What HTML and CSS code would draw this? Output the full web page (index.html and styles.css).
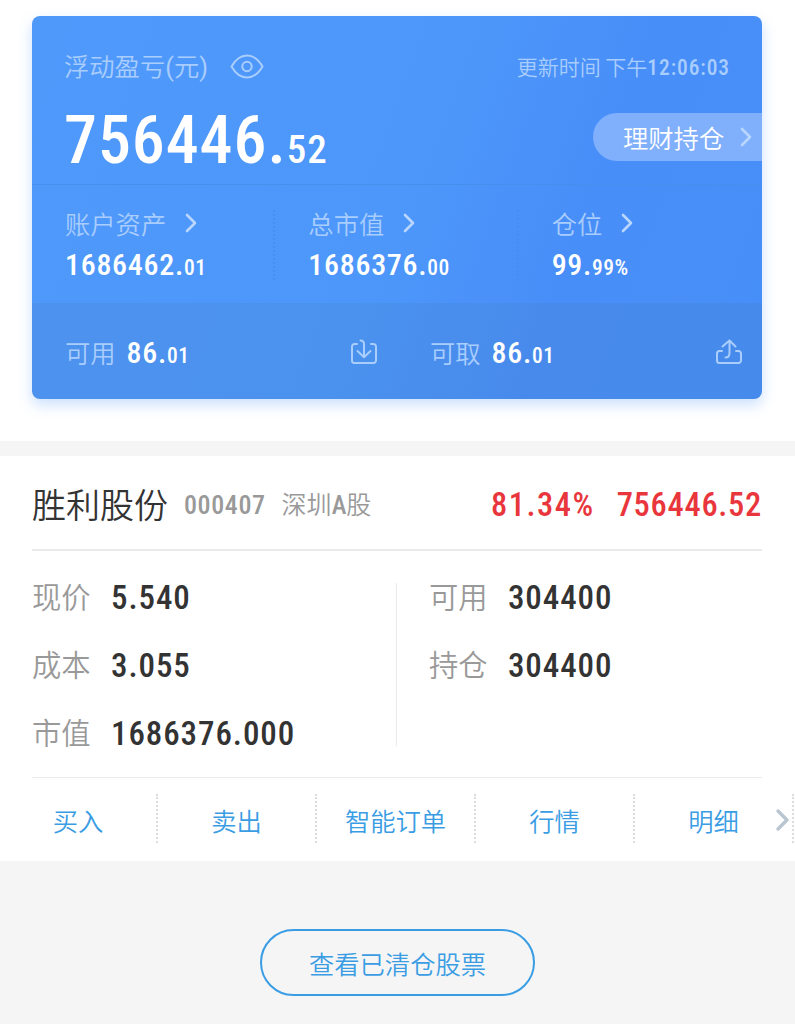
FILE: index.html
```
<!DOCTYPE html>
<html lang="zh-CN">
<head>
    <meta charset="UTF-8">
    <meta name="viewport" content="width=device-width, initial-scale=1.0">
    <title>持仓</title>
    <link rel="stylesheet" href="styles.css">
</head>
<body>

    <!-- 账户概览 -->
    <section class="overview">
        <div class="card">
            <div class="card-top">
                <div class="row title-row">
                    <span class="label">浮动盈亏<span class="paren">(</span>元<span class="paren">)</span></span>
                    <svg class="eye" viewBox="0 0 34 26" width="34" height="26">
                        <path d="M1.500 12.500C5.500 5.500 11 1.500 17 1.500s11.500 4 15.500 11c-4 7-9.500 11-15.500 11s-11.500-4-15.500-11z"/>
                        <circle cx="17" cy="12.500" r="4.700"/>
                    </svg>
                    <span class="time">更新时间 下午<span class="num">12:06:03</span></span>
                </div>
                <div class="row profit-row">
                    <span class="profit num">756446.<small>52</small></span>
                    <a class="pill" href="#">理财持仓
                        <svg class="arrow" viewBox="0 0 12 20" width="12" height="20"><path d="M2 2l8 8-8 8"/></svg>
                    </a>
                </div>
            </div>

            <div class="stats">
                <div class="stat">
                    <span class="label">账户资产<svg class="arrow" viewBox="0 0 12 20" width="12" height="20"><path d="M2 2l8 8-8 8"/></svg></span>
                    <span class="value num">1686462.<small>01</small></span>
                </div>
                <div class="stat">
                    <span class="label">总市值<svg class="arrow" viewBox="0 0 12 20" width="12" height="20"><path d="M2 2l8 8-8 8"/></svg></span>
                    <span class="value num">1686376.<small>00</small></span>
                </div>
                <div class="stat">
                    <span class="label">仓位<svg class="arrow" viewBox="0 0 12 20" width="12" height="20"><path d="M2 2l8 8-8 8"/></svg></span>
                    <span class="value num">99.<small>99%</small></span>
                </div>
            </div>

            <div class="cash">
                <div class="cash-item">
                    <span class="label">可用</span>
                    <span class="value num">86.<small>01</small></span>
                    <svg class="transfer" viewBox="0 0 28 26" width="28" height="26">
                        <path d="M7 5H4.500A2.500 2.500 0 0 0 2 7.500v14A2.500 2.500 0 0 0 4.500 24h19a2.500 2.500 0 0 0 2.500-2.500v-14A2.500 2.500 0 0 0 23.500 5H21"/>
                        <path d="M10.500 1.500Q14 1.500 14 5v13M7.500 12l6.500 6.300 6.500-6.300"/>
                    </svg>
                </div>
                <div class="cash-item">
                    <span class="label">可取</span>
                    <span class="value num">86.<small>01</small></span>
                    <svg class="transfer" viewBox="0 0 28 26" width="28" height="26">
                        <path d="M7 12H4.500A2.500 2.500 0 0 0 2 14.500v7A2.500 2.500 0 0 0 4.500 24h19a2.500 2.500 0 0 0 2.500-2.500v-7a2.500 2.500 0 0 0-2.500-2.500H21"/>
                        <path d="M10.500 18.500Q14.500 18.500 14.500 14V1.500M7.500 7.500l7-6 6 6"/>
                    </svg>
                </div>
            </div>
        </div>
    </section>

    <!-- 持仓股票 -->
    <section class="stock">
        <div class="stock-head">
            <h2>胜利股份</h2>
            <span class="code num">000407</span>
            <span class="market">深圳<span class="num">A</span>股</span>
            <span class="rate num">81.34%</span>
            <span class="gain num">756446.52</span>
        </div>
        <div class="details">
            <dl>
                <div><dt>现价</dt><dd class="num">5.540</dd></div>
                <div><dt>成本</dt><dd class="num">3.055</dd></div>
                <div><dt>市值</dt><dd class="num">1686376.000</dd></div>
            </dl>
            <dl>
                <div><dt>可用</dt><dd class="num">304400</dd></div>
                <div><dt>持仓</dt><dd class="num">304400</dd></div>
            </dl>
        </div>
        <nav class="actions">
            <a href="#">买入</a>
            <a href="#">卖出</a>
            <a href="#">智能订单</a>
            <a href="#">行情</a>
            <a href="#">明细</a>
            <svg class="more" viewBox="0 0 16 24" width="16" height="24"><path d="M3 3l9 9-9 9"/></svg>
        </nav>
    </section>

    <div class="footer">
        <a class="history" href="#">查看已清仓股票</a>
    </div>

</body>
</html>
```

FILE: styles.css
```
* {
    box-sizing: border-box;
}

body {
    margin: 0;
    background-color: #f5f5f5;
    font-family: "Noto Sans CJK SC", sans-serif;
    font-weight: 350;
    font-size: 25.3px;
    line-height: 1;
    color: #333;
    overflow-x: hidden;
}

a {
    color: #3a9de4;
    text-decoration: none;
}

svg {
    fill: none;
    stroke: currentColor;
    stroke-linecap: round;
    stroke-linejoin: round;
    flex: none;
}

.num {
    font-family: Roboto, sans-serif;
    font-weight: 500;
    font-stretch: 75%;
}

/* 账户概览 */
.overview {
    height: 441px;
    padding: 16px 33px 0 32px;
    background-color: #fff;
}

.card {
    height: 383px;
    border-radius: 8px;
    background: linear-gradient(110deg, #4f99fb 0%, #4d97fa 50%, #488ef8 72%, #478ff8 100%);
    box-shadow: 0 6px 14px rgba(72, 143, 248, 0.28);
    color: #fff;
    overflow: hidden;
}

.card-top {
    height: 169px;
    padding-left: 32px;
    border-bottom: 1px solid #468fed;
}

.row {
    display: flex;
    align-items: center;
}

.label {
    color: #a9cdfd;
    white-space: nowrap;
}

.title-row {
    height: 102px;
    padding-right: 32px;
}

.title-row .label {
    width: 143px;
}

.paren {
    font-family: Roboto, sans-serif;
    font-weight: 400;
}

.eye {
    margin-left: 23px;
    color: #a9cdfd;
    stroke-width: 2;
}

.time {
    margin-left: auto;
    font-size: 21px;
    color: #a9cdfd;
    white-space: nowrap;
}

.time .num {
    font-size: 21.5px;
    letter-spacing: 0.9px;
}

.profit-row {
    height: 48px;
    margin-top: -5px;
    justify-content: space-between;
}

.profit {
    padding-top: 8px;
    font-size: 66px;
    letter-spacing: 0.9px;
}

.profit small {
    font-size: 39px;
    letter-spacing: 1px;
}

.pill {
    display: flex;
    align-items: center;
    justify-content: space-between;
    width: 169px;
    height: 48px;
    padding: 2px 10px 0 30px;
    border-radius: 24px 0 0 24px;
    background-color: #80affc;
    color: #fff;
}

.arrow {
    margin-bottom: 2px;
    stroke-width: 2.6;
    color: #b9d6fe;
}

.stats {
    display: flex;
    height: 118px;
    padding-top: 25px;
}

.stat {
    display: flex;
    flex-direction: column;
    width: 243.5px;
    height: 70px;
    padding-left: 33px;
    border-right: 2px dotted #468ef2;
}

.stat:last-child {
    border-right: none;
}

.stat .label {
    display: flex;
    align-items: center;
    height: 29px;
}

.stat .arrow {
    margin-left: 19px;
}

.value {
    font-size: 30px;
    letter-spacing: 0.7px;
}

.stat .value {
    margin-top: 13px;
}

.value small {
    font-size: 21.5px;
    letter-spacing: 0.5px;
}

.cash {
    display: flex;
    height: 96px;
    background-color: rgba(70, 125, 190, 0.2);
}

.cash-item {
    display: flex;
    align-items: center;
    width: 50%;
    padding: 3px 19px 0 33px;
}

.cash-item .value {
    margin-left: 11px;
}

.transfer {
    margin: 0 0 2px auto;
    color: #a9cdfd;
    stroke-width: 2;
}

/* 持仓股票 */
.stock {
    margin-top: 15px;
    height: 405px;
    background-color: #fff;
}

.stock-head {
    display: flex;
    align-items: center;
    height: 95px;
    margin: 0 33px 0 32px;
    padding-top: 4px;
    border-bottom: 2px solid #ebebeb;
    white-space: nowrap;
}

.stock-head h2 {
    margin: 0 0 2px;
    font-size: 34px;
    font-weight: 350;
}

.code {
    margin-left: 16px;
    font-size: 26px;
    letter-spacing: 0.6px;
    color: #999;
}

.market {
    margin-left: 16px;
    font-size: 25px;
    color: #999;
}

.rate,
.gain {
    padding-top: 1px;
    font-size: 32.5px;
    letter-spacing: 0.7px;
    color: #e8363c;
}

.rate {
    margin-left: auto;
    letter-spacing: 1.5px;
}

.gain {
    margin-left: 22px;
}

.details {
    display: flex;
    height: 227px;
    margin: 0 33px 0 32px;
    padding-top: 32px;
    border-bottom: 1px solid #ebebeb;
}

.details dl {
    width: 366px;
    height: 163px;
    margin: 0;
    border-right: 1px solid #ebebeb;
}

.details dl + dl {
    padding-left: 32px;
    border-right: none;
}

.details dl div {
    display: flex;
    align-items: center;
    height: 28px;
    margin-bottom: 40px;
}

.details dt {
    width: 79px;
    padding-bottom: 2px;
    font-size: 29.3px;
    color: #999;
}

.details dd {
    margin: 0;
    font-size: 33px;
    letter-spacing: 0.9px;
}

/* 操作栏 */
.actions {
    position: relative;
    display: flex;
    height: 83px;
    padding-top: 16px;
    overflow: hidden;
}

.actions a {
    flex: none;
    width: 159px;
    height: 49px;
    line-height: 52px;
    text-align: center;
    border-right: 2px dotted #dcdcdc;
}

.actions a:first-child {
    width: 158px;
}

/* 箭头浮在最后一栏上 */
.more {
    position: absolute;
    right: 4px;
    top: 30px;
    color: #b9c6d2;
    stroke-width: 3.4;
}

.footer {
    display: flex;
    justify-content: center;
    padding-top: 68px;
}

.history {
    width: 275px;
    height: 67px;
    line-height: 65px;
    border: 2px solid #3a9de4;
    border-radius: 34px;
    text-align: center;
}
```
